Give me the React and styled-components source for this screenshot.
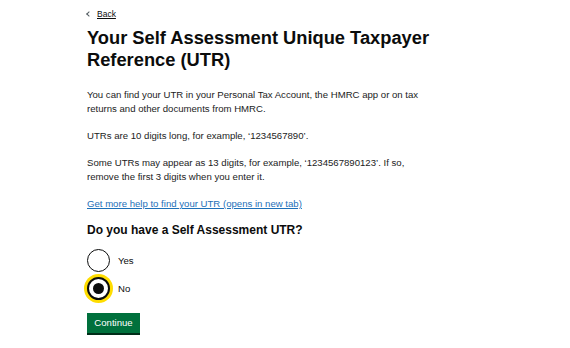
import React from "react";
import styled, { createGlobalStyle } from "styled-components";

const GlobalStyle = createGlobalStyle`
  html, body {
    margin: 0;
    padding: 0;
    background: #ffffff;
  }
  body {
    font-family: "Liberation Sans", Arial, sans-serif;
    color: #0b0c0c;
  }
`;

const Page = styled.main`
  width: 570px;
  height: 348px;
  box-sizing: border-box;
  padding: 2px 0 0 87px;
`;

const BackLink = styled.a`
  display: inline-flex;
  align-items: center;
  gap: 4px;
  font-size: 8.5px;
  line-height: 12px;
  color: #0b0c0c;
  text-decoration: underline;
  text-underline-offset: 1px;

  &::before {
    content: "";
    width: 3px;
    height: 3px;
    border-left: 1px solid #505a5f;
    border-bottom: 1px solid #505a5f;
    transform: rotate(45deg);
    margin-right: 2px;
  }
`;

const Heading = styled.h1`
  margin: 7px 0 0;
  font-size: 18.3px;
  line-height: 22px;
  font-weight: 700;
`;

const Body = styled.div`
  margin-top: 17px;
  display: flex;
  flex-direction: column;
  gap: 13px;
`;

const Para = styled.p`
  margin: 0;
  font-size: 9.6px;
  line-height: 14px;
  color: #1b1c1c;
`;

const HelpLink = styled.a`
  font-size: 9.6px;
  line-height: 14px;
  color: #1d70b8;
  text-decoration: underline;
  text-underline-offset: 1px;
`;

const Question = styled.h2`
  margin: 10px 0 0;
  font-size: 12px;
  line-height: 18px;
  font-weight: 700;
`;

const Radios = styled.div`
  margin-top: 9px;
  display: flex;
  flex-direction: column;
  gap: 4px;
`;

const RadioRow = styled.label`
  display: flex;
  align-items: center;
  gap: 8px;
  font-size: 9.6px;
  height: 24px;
`;

const Circle = styled.span`
  box-sizing: border-box;
  width: 23px;
  height: 23px;
  border-radius: 50%;
  border: 2px solid #0b0c0c;
  background: #fff;
  display: flex;
  align-items: center;
  justify-content: center;
  box-shadow: ${(p) => (p.$focus ? "0 0 0 3px #ffdd00" : "none")};

  &::after {
    content: "";
    display: ${(p) => (p.$checked ? "block" : "none")};
    width: 11px;
    height: 11px;
    border-radius: 50%;
    background: #0b0c0c;
  }
`;

const Thin = styled(Circle)`
  border-width: 1px;
`;

const Button = styled.button`
  margin-top: 13px;
  width: 53px;
  height: 20px;
  padding: 0;
  border: none;
  background: #00703c;
  box-shadow: 0 2px 0 #002d18;
  color: #ffffff;
  font-family: "Liberation Sans", Arial, sans-serif;
  font-size: 9.6px;
  line-height: 20px;
`;

export default function App() {
  return (
    <>
      <GlobalStyle />
      <Page>
        <BackLink href="#">Back</BackLink>
        <Heading>
          Your Self Assessment Unique Taxpayer
          <br />
          Reference (UTR)
        </Heading>
        <Body>
          <Para>
            You can find your UTR in your Personal Tax Account, the HMRC app or on tax
            <br />
            returns and other documents from HMRC.
          </Para>
          <Para>UTRs are 10 digits long, for example, ‘1234567890’.</Para>
          <Para>
            Some UTRs may appear as 13 digits, for example, ‘1234567890123’. If so,
            <br />
            remove the first 3 digits when you enter it.
          </Para>
          <Para>
            <HelpLink href="#">Get more help to find your UTR (opens in new tab)</HelpLink>
          </Para>
        </Body>
        <Question>Do you have a Self Assessment UTR?</Question>
        <Radios>
          <RadioRow>
            <Thin />
            Yes
          </RadioRow>
          <RadioRow>
            <Circle $checked $focus />
            No
          </RadioRow>
        </Radios>
        <Button>Continue</Button>
      </Page>
    </>
  );
}
